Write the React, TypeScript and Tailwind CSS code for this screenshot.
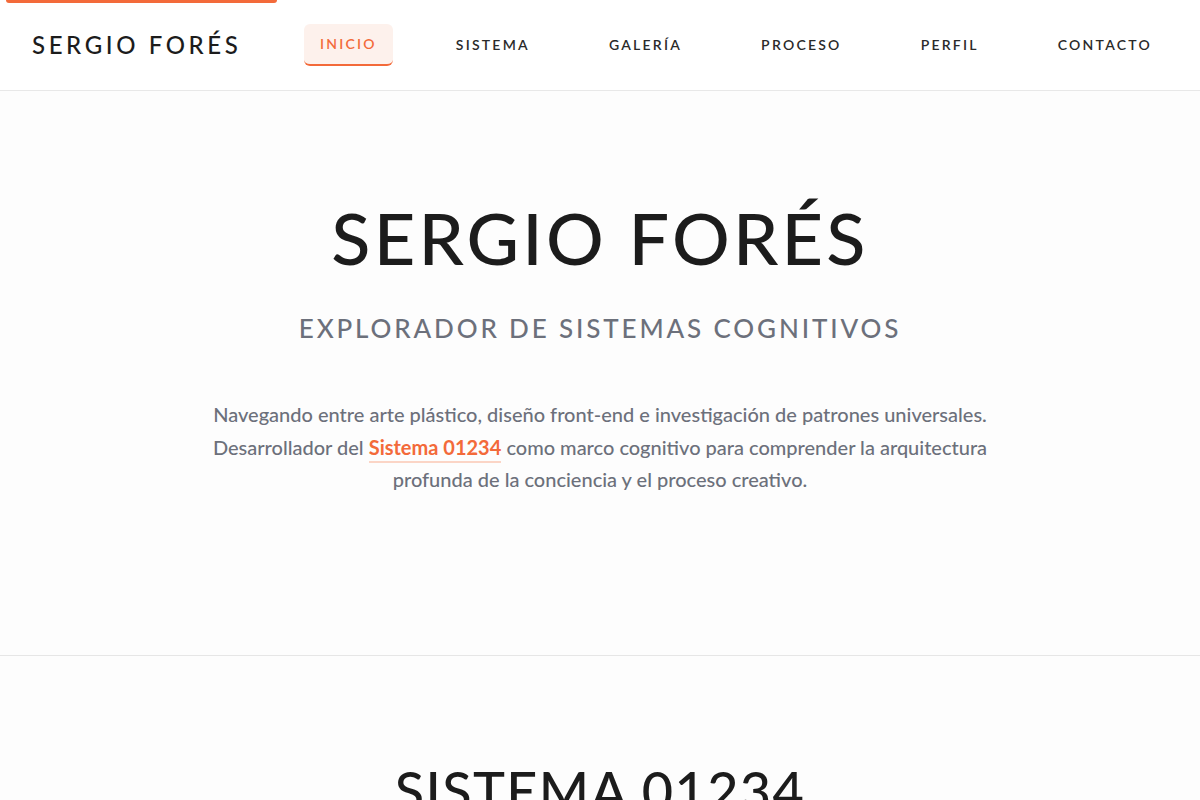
import { useState } from 'react';

const NAV = ['INICIO', 'SISTEMA', 'GALERÍA', 'PROCESO', 'PERFIL', 'CONTACTO'];

export default function App() {
  const [active, setActive] = useState('INICIO');

  return (
    <div className="min-h-screen bg-[#fdfdfd] text-[#1c1c1c] font-['Lato','Liberation_Sans',sans-serif]">
      {/* scroll progress */}
      <div className="fixed top-0 left-[6px] h-[3px] w-[271px] rounded-b-full bg-[#f36a3a] z-20" />

      <header className="h-[91px] border-b border-[#e8e8e8] bg-white/70 flex items-center px-8">
        <div className="text-[24px] tracking-[0.15em] font-medium text-[#1c1c1c] whitespace-nowrap">
          SERGIO FORÉS
        </div>
        <nav className="ml-auto flex items-center gap-[47px]">
          {NAV.map((item) => (
            <button
              key={item}
              onClick={() => setActive(item)}
              className={`h-[42px] px-4 rounded-md text-[14px] tracking-[0.16em] font-semibold pb-[1px] transition-colors ${
                active === item
                  ? 'bg-[#fdf1ec] text-[#f36a3a] border-b-2 border-[#f36a3a]'
                  : 'text-[#2a2a2a]'
              }`}
            >
              {item}
            </button>
          ))}
        </nav>
      </header>

      <section className="h-[565px] border-b border-[#e6e6e6] flex flex-col items-center pt-[110px]">
        <h1 className="text-[72px] leading-none tracking-[0.045em] font-medium text-[#1c1c1c]">SERGIO FORÉS</h1>
        <h2 className="mt-[42px] text-[26px] leading-none tracking-[0.11em] font-medium text-[#6c707b]">
          EXPLORADOR DE SISTEMAS COGNITIVOS
        </h2>
        <p className="mt-[57px] max-w-[820px] text-center text-[20px] leading-[32.5px] font-medium text-[#6c707b]">
          Navegando entre arte plástico, diseño front-end e investigación de patrones universales.
          <br />
          Desarrollador del{' '}
          <a href="#sistema" className="text-[#f36a3a] font-bold border-b-2 border-[#fbd5c6] pb-[2px]">
            Sistema 01234
          </a>{' '}
          como marco cognitivo para comprender la arquitectura
          <br />
          profunda de la conciencia y el proceso creativo.
        </p>
      </section>

      <section id="sistema" className="flex flex-col items-center pt-[108px] pb-20">
        <h2 className="text-[54px] leading-none tracking-[0.025em] font-medium text-[#1c1c1c]">SISTEMA 01234</h2>
      </section>
    </div>
  );
}
